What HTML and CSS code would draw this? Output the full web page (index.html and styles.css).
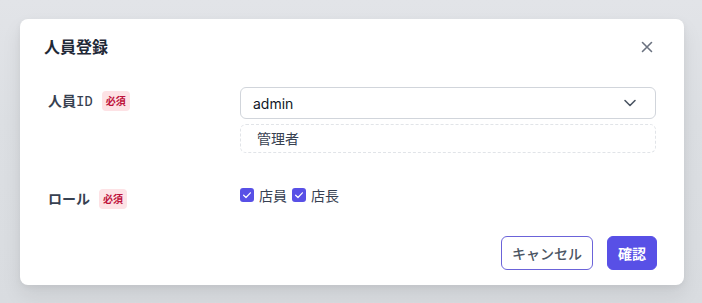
FILE: index.html
```html
<!DOCTYPE html>
<html lang="ja">
<head>
<meta charset="utf-8">
<link rel="stylesheet" href="styles.css">
</head>
<body>
<div class="backdrop">
  <div class="modal">
    <div class="modal-header">
      <h2 class="modal-title">人員登録</h2>
      <button class="close-btn" aria-label="close">
        <svg width="12" height="12" viewBox="0 0 12 12"><path d="M1.5 1.5L10.5 10.5M10.5 1.5L1.5 10.5" stroke="#6b7280" stroke-width="1.6" stroke-linecap="round" fill="none"/></svg>
      </button>
    </div>
    <div class="modal-body">
      <div class="form-row">
        <div class="label"><span class="label-text">人員<span class="mono">ID</span></span><span class="badge">必須</span></div>
        <div class="field">
          <div class="select">
            <span>admin</span>
            <svg width="14" height="14" viewBox="0 0 14 14"><path d="M2 4.5L7 9.5L12 4.5" stroke="#4b5563" stroke-width="1.6" stroke-linecap="round" stroke-linejoin="round" fill="none"/></svg>
          </div>
          <div class="sub-box">管理者</div>
        </div>
      </div>
      <div class="form-row row-role">
        <div class="label"><span class="label-text">ロール</span><span class="badge">必須</span></div>
        <div class="field checks">
          <label class="check"><span class="box"><svg width="14" height="14" viewBox="0 0 14 14"><path d="M3.6 7.2L6 9.5L10.4 4.8" stroke="#fff" stroke-width="1.2" stroke-linecap="round" stroke-linejoin="round" fill="none"/></svg></span>店員</label>
          <label class="check"><span class="box"><svg width="14" height="14" viewBox="0 0 14 14"><path d="M3.6 7.2L6 9.5L10.4 4.8" stroke="#fff" stroke-width="1.2" stroke-linecap="round" stroke-linejoin="round" fill="none"/></svg></span>店長</label>
        </div>
      </div>
    </div>
    <div class="modal-footer">
      <button class="btn btn-outline">キャンセル</button>
      <button class="btn btn-primary">確認</button>
    </div>
  </div>
</div>
</body>
</html>
```
FILE: styles.css
```css
* { box-sizing: border-box; }
html, body { margin: 0; padding: 0; }
body {
  width: 702px;
  height: 303px;
  overflow: hidden;
  background: #dcdfe3;
  font-family: Inter, "Noto Sans CJK JP", sans-serif;
  color: #374151;
}
.backdrop {
  padding: 19px 18px 0 20px;
  background: linear-gradient(180deg, #e2e4e8 0%, #dcdfe3 40%, #d9dce0 100%);
  height: 303px;
}
.modal {
  width: 664px;
  height: 266px;
  background: #fff;
  border-radius: 8px;
  box-shadow: 0 10px 20px rgba(0,0,0,0.08), 0 2px 6px rgba(0,0,0,0.05);
  display: flex;
  flex-direction: column;
}
.modal-header {
  display: flex;
  align-items: center;
  justify-content: space-between;
  padding: 16px 31px 0 24px;
  height: 56px;
}
.modal-title {
  margin: 0;
  font-size: 16px;
  line-height: 24px;
  font-weight: 700;
  color: #1f2937;
  align-self: flex-start;
}
.close-btn {
  align-self: flex-start;
  margin-top: 6px;
  border: 0;
  background: none;
  padding: 0;
  width: 12px;
  height: 12px;
  display: flex;
}
.modal-body {
  padding: 12px 28px 0 28px;
  flex: 1;
}
.form-row {
  display: flex;
  align-items: flex-start;
}
.row-role { margin-top: 32px; }
.label {
  width: 192px;
  display: flex;
  align-items: center;
  gap: 9px;
  margin-top: 4px;
  height: 20px;
}
.label-text {
  font-size: 14px;
  font-weight: 600;
  color: #374151;
  line-height: 20px;
}
.mono {
  font-family: "DejaVu Sans Mono", monospace;
  font-weight: 400;
  font-size: 14px;
}
.badge {
  background: #fde2e5;
  color: #be123c;
  font-size: 10px;
  font-weight: 700;
  line-height: 14px;
  padding: 3px 4px;
  border-radius: 4px;
}
.field { flex: 1; }
.select {
  height: 32px;
  border: 1px solid #d1d5db;
  border-radius: 6px;
  display: flex;
  align-items: center;
  justify-content: space-between;
  padding: 0 18px 0 12px;
  font-size: 14px;
  color: #111827;
}
.sub-box {
  margin-top: 5px;
  height: 29px;
  border: 1px dashed #e1e4e8;
  border-radius: 6px;
  padding: 0 16px;
  font-size: 14px;
  line-height: 27px;
  color: #374151;
}
.checks {
  display: flex;
  align-items: center;
  gap: 5px;
  height: 20px;
}
.check {
  display: flex;
  align-items: center;
  gap: 5px;
  font-size: 14px;
  color: #374151;
}
.box {
  width: 14px;
  height: 14px;
  border-radius: 3px;
  background: #5850e6;
  display: flex;
}
.modal-footer {
  display: flex;
  justify-content: flex-end;
  gap: 14px;
  padding: 0 27px 15px 0;
}
.btn {
  height: 34px;
  font-size: 14px;
  font-family: Inter, "Noto Sans CJK JP", sans-serif;
  border-radius: 6px;
  padding: 0 10px;
  cursor: pointer;
}
.btn-outline {
  background: #fff;
  border: 1px solid #6b63d9;
  color: #4b5563;
  font-weight: 500;
}
.btn-primary {
  background: #5850e6;
  border: 1px solid #5850e6;
  color: #fff;
  font-weight: 700;
  width: 50px;
  padding: 0;
}
```
